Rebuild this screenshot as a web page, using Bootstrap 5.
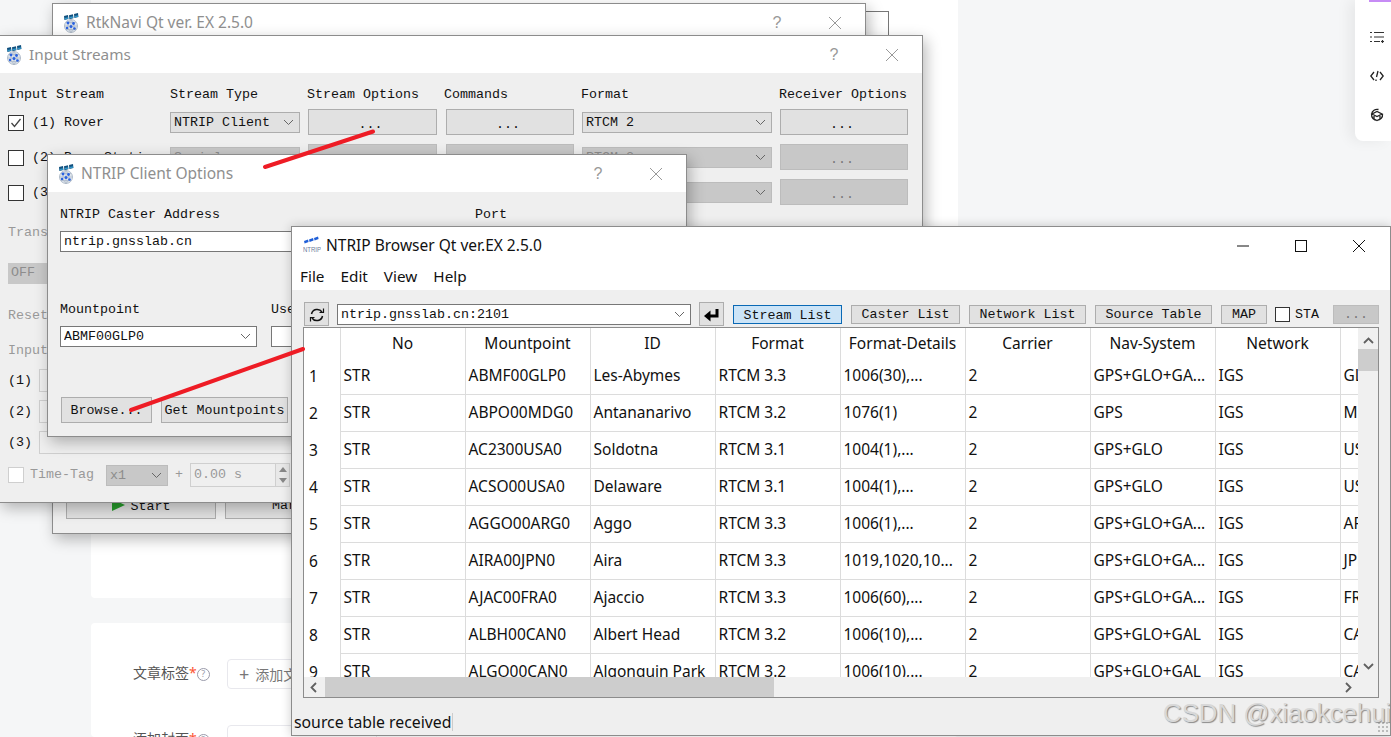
<!DOCTYPE html>
<html lang="en">
<head>
<meta charset="utf-8">
<title>NTRIP Browser</title>
<link href="https://cdn.jsdelivr.net/npm/bootstrap@5.3.0/dist/css/bootstrap.min.css" rel="stylesheet">
<style>
html,body{height:737px;overflow:hidden}
body{background:#f5f6f7;font-family:"Noto Sans","Noto Sans CJK SC",sans-serif;position:relative}
.page-col{position:absolute;left:91px;width:867px;top:0;bottom:0;overflow:hidden}
.sheet{background:#fff;border-radius:4px}
.sheet-a{height:598px;margin-bottom:25px;border-top-left-radius:0;border-top-right-radius:0}
.sheet-b{height:114px;padding:36px 0 0 42px;overflow:hidden}
.field-row{height:30px;font-size:14px;color:#555}
.field-row-2{margin-top:36px}
.field-label{width:94px;white-space:nowrap;padding-bottom:3px}
.field-label b{color:#fc5531;font-weight:400}
.help-dot{display:inline-block;width:13px;height:13px;border:1.5px solid #999aaa;border-radius:50%;font-size:9px;line-height:10px;text-align:center;color:#999aaa;vertical-align:1px}
.tag-add{border:1px solid #e8e8ed;border-radius:4px;height:30px;width:150px;padding-left:11px;color:#777}
.tag-add i{font-style:normal;font-size:18px;margin-right:6px;line-height:1}
.side-rail{position:absolute;left:1355px;top:0;width:36px;height:141px;background:#fff;border-bottom-left-radius:8px;box-shadow:-6px 0 14px rgba(0,0,0,.06)}
.side-rail::before{content:"";display:block;height:2px;margin-left:14px;background:#c78cf5}
.side-rail svg{display:block;margin:0 0 0 15px}
.rail-first{margin-top:28px!important}.rail-next{margin-top:25px!important}

.qt-win{position:absolute;border:1px solid #8c8c8c;background:#efefef;box-shadow:3px 5px 14px rgba(0,0,0,.28);display:flex;flex-direction:column;overflow:hidden}
.w-rtk{left:52px;top:3px;width:814px;height:531px;z-index:2}
.w-back{position:absolute;left:860px;top:11px;width:29px;height:40px;border:1px solid #777;background:#fff;z-index:1}
.w-input{left:-1px;top:35px;width:924px;height:468px;z-index:3}
.w-opts{left:47px;top:154px;width:640px;height:283px;z-index:4}
.w-browser{left:291px;top:226px;width:1100px;height:510px;z-index:5;box-shadow:0 0 10px rgba(0,0,0,.2)}
.ttl{height:37px;background:#fff;flex:none;display:flex;align-items:center;padding:0 1px 0 10px;font-size:15.5px;color:#8f8f8f}
.ttl svg.logo{width:16px;height:20px;margin-right:7px;flex:none}
.ttl-in{padding-left:6px;font-size:15.3px}
.ttl-act{color:#111;padding:0 2px 0 11px}
.ttl-act svg.logo{width:18px;margin-right:5px}
.tb{width:58px;height:37px;display:flex;align-items:center;justify-content:center;flex:none;color:#999;font-size:16px}
.tb-act{color:#111}
.q{font-family:"Liberation Sans",sans-serif}

.mono,.mono .btn,.mono .form-select,.mono .form-control{font-family:"Liberation Mono",monospace;font-size:13.33px;color:#111}
.mono{white-space:nowrap;line-height:16px}
.qt-btn.btn{border-radius:0;background:#e1e1e1;border:1px solid #adadad;padding:0;line-height:1;opacity:1;color:#111}
.qt-btn.btn:disabled{background:#c8c8c8;border-color:#bcbcbc;color:#777;opacity:1}
.qt-sel.form-select{border-radius:0;height:21px;padding:0 18px 0 3px;background-color:#fff;border:1px solid #adadad;line-height:19px;background-position:right 5px center;background-size:11px 7px;background-image:url("data:image/svg+xml,%3csvg xmlns='http://www.w3.org/2000/svg' viewBox='0 0 11 7'%3e%3cpath fill='none' stroke='%23666' d='M1 1l4.5 4.5L10 1'/%3e%3c/svg%3e")}
.qt-sel.form-select:disabled{background-color:#c8c8c8;border-color:#bcbcbc;color:#8d8d8d}
.qt-sel.sel-gray.form-select{background-color:#e1e1e1}
.qt-sel.sel-lined.form-select{border-color:#777}
.qt-edit.form-control{border-radius:0;height:21px;padding:0 3px;background:#fff;border:1px solid #777;line-height:19px}
.qt-edit.form-control:disabled{background:#efefef;border-color:#cfcfcf;color:#999}
.qt-chk.form-check-input{width:16px;height:16px;margin:0;border-radius:0;border:1px solid #333;background-color:#fff;flex:none;opacity:1}
.qt-chk.form-check-input:checked{background-color:#fff;border-color:#333;background-size:14px;background-image:url("data:image/svg+xml,%3csvg xmlns='http://www.w3.org/2000/svg' viewBox='0 0 14 14'%3e%3cpath fill='none' stroke='%23444' stroke-width='1.3' d='M2.5 7l3 3.5 6-7.5'/%3e%3c/svg%3e")}
.qt-chk.form-check-input:disabled{border-color:#cfcfcf}

.is-body{padding:14px 0 0 8px;color:#111}
.is-grid{display:grid;grid-template-columns:162px 138px 138px 136px 198px 128px;grid-auto-rows:26px;row-gap:9px;align-items:center}
.is-head{height:16px;margin-bottom:6px;display:grid;grid-template-columns:162px 137px 137px 137px 198px 128px}
.is-head>span{display:block}
.is-label{display:flex;align-items:center;gap:8px;padding-top:1px}
.is-grid .qt-sel{width:130px}
.is-grid .sel-wide{width:190px}
.is-grid .qt-btn{height:26px;width:128px;padding:6px 4px 0 0}
.is-grid .btn-wide.qt-btn{width:129px}
.gray-t{color:#999!important}
.m-trans{margin-top:20px}
.off-box{margin-top:22px;width:120px;height:21px;background:#c8c8c8;color:#8d8d8d;padding:2px 3px}
.m-reset{margin-top:24px}
.m-input{margin-top:19px}
.rel-rows{margin-top:10px;display:flex;flex-direction:column;gap:8px}
.rel-row{display:flex;align-items:center;height:23px}
.rel-row span{width:31px}
.rel-row .form-control{width:500px;height:23px}
.tt-row{margin-top:9px;height:24px;display:flex;align-items:center}
.tt-row .qt-chk{margin-right:6px}
.tt-text{width:76px}
.tt-row .qt-sel{width:62px}
.tt-plus{width:22px;text-align:center}
.spin{width:100px;height:24px;border:1px solid #cfcfcf;padding:3px;position:relative}
.spin-arr{position:absolute;right:0;top:0;bottom:0;width:14px;border-left:1px solid #cfcfcf;display:flex;flex-direction:column;align-items:center;justify-content:space-around;background:#e8e8e8}
.spin-arr i{display:block;width:0;height:0;border-left:4px solid transparent;border-right:4px solid transparent}
.spin-arr .up{border-bottom:5px solid #888}.spin-arr .dn{border-top:5px solid #888}

.start-row{margin-top:auto;padding:0 0 14px 13px;display:flex;gap:9px}
.start-row .qt-btn{width:150px;height:26px}
.go{display:inline-block;width:0;height:0;border-left:13px solid #279c2c;border-top:6px solid transparent;border-bottom:6px solid transparent;margin-right:6px;vertical-align:-1px}

.op-body{padding:15px 0 0 12px}
.op-top{display:flex;height:16px}
.op-top span:first-child{width:415px}
.op-edit{margin-top:8px}
.op-edit .qt-edit{width:560px}
.op-mid{margin-top:50px;display:flex}
.op-mid>div:first-child{width:211px}
.op-mid .qt-sel{width:197px;margin-top:8px}
.op-mid .qt-edit{width:200px;margin-top:8px}
.op-btns{margin-top:50px;display:flex;gap:9px;padding-left:1px}
.op-btns .qt-btn{height:26px;padding-top:1px}
.op-b1{width:91px}.op-b2{width:127px}

.menu-row{height:26px;background:#fff;flex:none;display:flex;gap:16px;padding-left:8px;font-size:15.3px;color:#111;align-items:flex-start;line-height:24px}
.tool-row{height:37px;flex:none;display:flex;align-items:center;padding:11px 0 0 12px;white-space:nowrap}
.tool-row .qt-btn{height:19px;padding-top:1px}
.tool-ic.btn{width:25px;height:24px!important;display:flex;align-items:center;justify-content:center;flex:none}
.tool-row .qt-sel{width:354px;margin:0 8px;height:21px}
.tb-sl.btn{width:109px;margin-left:9px;background:#cce4f7;border-color:#0a69b5;padding-top:3px}
.tb-cl.btn{width:109px;margin-left:9px}
.tb-nl.btn,.tb-st.btn{width:117px;margin-left:9px}
.tb-map.btn{width:46px;margin-left:9px}
.tool-row .qt-chk{margin:0 5px 0 8px;width:15px;height:15px}
.tool-row>span{padding-top:1px}
.tb-more.btn{width:46px;margin-left:14px}
.t-wrap{margin:0 11px;width:1076px;height:371px;border:1px solid #8c8c8c;background:#f0f0f0;display:grid;grid-template-columns:1054px 20px;grid-template-rows:349px 20px;flex:none}
.t-clip{overflow:hidden;background:#fff}
.st-table.table{table-layout:fixed;width:1161px;margin:0;font-size:15.5px;color:#111;--bs-table-bg:#fff;--bs-table-color:#111}
.st-table th:first-child,.st-table td:first-child{width:36px}
.st-table th,.st-table td{width:125px;height:37px;padding:0 0 0 3px;white-space:nowrap;overflow:hidden;border:0;border-right:1px solid #dcdcdc;border-bottom:1px solid #dcdcdc;vertical-align:middle}
.st-table thead th{height:29px;font-weight:400;text-align:center;border-bottom:0;padding:2px 0 0;font-size:15.5px}
.st-table tbody th{font-weight:400;border-bottom:0;padding-left:5px;padding-top:2px;width:36px}
.st-table thead th:first-child{padding:0}
.v-bar{display:flex;flex-direction:column;align-items:center;position:relative}
.v-thumb{position:absolute;top:21px;left:0;width:20px;height:22px;background:#cdcdcd}
.h-bar{position:relative;display:flex;justify-content:space-between;align-items:center;padding:0 6px}
.h-thumb{position:absolute;left:21px;top:0;bottom:0;width:449px;background:#cdcdcd}
.v-bar svg.up-a{margin-top:9px}.v-bar svg.dn-a{margin-top:auto;margin-bottom:7px}
.stat-row{flex:none;height:36px;padding:15px 0 0 2px;font-size:15.8px;line-height:18px;color:#111;position:relative}
.stat-row span{display:inline-block;border-right:1px solid #ccc;padding-right:1px;height:18px}
.grip{position:absolute;right:1px;bottom:1px;width:12px;height:12px;background-image:radial-gradient(#bbb 1px,transparent 1.2px);background-size:4px 4px}
.arrows{position:absolute;left:0;top:0;z-index:6;pointer-events:none}
.mark-text{position:absolute;left:1163px;top:697px;z-index:7;font-family:"Liberation Sans",sans-serif;font-size:25.8px;line-height:32px;color:#d8d8d8;text-shadow:1px 1px 1px #8a8a8a;white-space:nowrap}
</style>
</head>
<body>
<svg width="0" height="0" class="position-absolute">
  <symbol id="sat" viewBox="0 0 16 20">
    <g fill="#12507e"><path d="M1 3l4-1 .4 4-4 1z"/><path d="M6 2.200l4-1 .4 4-4 1z"/><path d="M11 1l4-1 .4 4-4 1z"/></g>
    <g fill="#2f95c7"><path d="M1.500 5l3.500-.8.300 1.500-3.500.8z"/><path d="M6.500 4l3.500-.8.300 1.500-3.500.8z"/><path d="M11.500 3l3.500-.8.300 1.500-3.500.8z"/></g>
    <circle cx="8" cy="13" r="6.500" fill="#dfe6ee" stroke="#9aa7b8" stroke-width=".7"/>
    <path d="M1.500 13h13M8 6.500v13M3 9.500h10M3 16.500h10M8 6.500c-4 3-4 10 0 13M8 6.500c4 3 4 10 0 13" fill="none" stroke="#a3afbf" stroke-width=".6"/>
    <g fill="#2a62e0"><circle cx="5" cy="10" r="1.400"/><circle cx="10.500" cy="10.500" r="1.400"/><circle cx="8" cy="13.500" r="1.500"/><circle cx="4" cy="15" r="1.200"/><circle cx="11.500" cy="15.500" r="1.300"/></g>
  </symbol>
  <symbol id="xx" viewBox="0 0 14 14"><path d="M1 1l12 12M13 1L1 13" fill="none" stroke="currentColor" stroke-width="1"/></symbol>
</svg>

<div class="page-col">
  <div class="sheet sheet-a"></div>
  <div class="sheet sheet-b">
    <div class="field-row d-flex align-items-center">
      <div class="field-label">文章标签<b>*</b><span class="help-dot">?</span></div>
      <div class="tag-add d-flex align-items-center"><i>+</i>添加文章标签</div>
    </div>
    <div class="field-row field-row-2 d-flex align-items-center">
      <div class="field-label">添加封面<b>*</b><span class="help-dot">?</span></div>
      <div class="tag-add"></div>
    </div>
  </div>
</div>

<div class="side-rail">
  <svg class="rail-first" width="14" height="14" viewBox="0 0 14 14"><path d="M0 2.500h2M4 2.500h10M0 7h2M4 7h10M0 11.500h2M4 11.500h6M11 11.500h3M12.500 10v3" stroke="#333" stroke-width="1.200" fill="none"/></svg>
  <svg class="rail-next" width="14" height="14" viewBox="0 0 14 14"><path d="M4 3L.8 7 4 11M10 3l3.200 4L10 11M8 2L6.500 8M6 10.500v1.500" stroke="#222" stroke-width="1.300" fill="none"/></svg>
  <svg class="rail-next" width="14" height="14" viewBox="0 0 14 14"><path d="M8.500 1.500A5.500 5.500 0 1 0 12.500 6M2 6l5 2.500L12 6 7 3.500zM4 8v3l3 1.500L10 11V8" stroke="#222" stroke-width="1.300" fill="none"/></svg>
</div>

<div class="w-back"></div>

<div class="qt-win w-rtk">
  <div class="ttl"><svg class="logo"><use href="#sat"/></svg><span class="flex-grow-1">RtkNavi Qt ver. EX 2.5.0</span><span class="tb q">?</span><span class="tb"><svg width="14" height="14"><use href="#xx"/></svg></span></div>
  <div class="start-row mono">
    <button class="btn qt-btn" type="button"><i class="go"></i>Start</button>
    <button class="btn qt-btn" type="button">Markers</button>
  </div>
</div>

<div class="qt-win w-input">
  <div class="ttl ttl-in"><svg class="logo"><use href="#sat"/></svg><span class="flex-grow-1">Input Streams</span><span class="tb q">?</span><span class="tb"><svg width="14" height="14"><use href="#xx"/></svg></span></div>
  <div class="is-body mono">
    <div class="is-head"><span>Input Stream</span><span>Stream Type</span><span>Stream Options</span><span>Commands</span><span>Format</span><span>Receiver Options</span></div>
    <div class="is-grid">
      <label class="is-label"><input class="form-check-input qt-chk" type="checkbox" checked>(1) Rover</label>
      <select class="form-select qt-sel sel-gray"><option>NTRIP Client</option></select>
      <button class="btn qt-btn btn-wide" type="button">...</button>
      <button class="btn qt-btn" type="button">...</button>
      <select class="form-select qt-sel sel-wide sel-gray"><option>RTCM 2</option></select>
      <button class="btn qt-btn" type="button">...</button>

      <label class="is-label"><input class="form-check-input qt-chk" type="checkbox">(2) Base Station</label>
      <select class="form-select qt-sel" disabled><option>Serial</option></select>
      <button class="btn qt-btn btn-wide" type="button" disabled>...</button>
      <button class="btn qt-btn" type="button" disabled>...</button>
      <select class="form-select qt-sel sel-wide" disabled><option>RTCM 2</option></select>
      <button class="btn qt-btn" type="button" disabled>...</button>

      <label class="is-label"><input class="form-check-input qt-chk" type="checkbox">(3) Correction</label>
      <select class="form-select qt-sel" disabled><option>Serial</option></select>
      <button class="btn qt-btn btn-wide" type="button" disabled>...</button>
      <button class="btn qt-btn" type="button" disabled>...</button>
      <select class="form-select qt-sel sel-wide" disabled><option></option></select>
      <button class="btn qt-btn" type="button" disabled>...</button>
    </div>
    <div class="m-trans gray-t">Transmit NMEA GPGGA to Base Station</div>
    <div class="off-box">OFF</div>
    <div class="m-reset gray-t">Reset Cmd</div>
    <div class="m-input gray-t">Input File Paths</div>
    <div class="rel-rows">
      <div class="rel-row"><span>(1)</span><input class="form-control qt-edit" disabled></div>
      <div class="rel-row"><span>(2)</span><input class="form-control qt-edit" disabled></div>
      <div class="rel-row"><span>(3)</span><input class="form-control qt-edit" disabled></div>
    </div>
    <div class="tt-row">
      <input class="form-check-input qt-chk" type="checkbox" disabled>
      <span class="tt-text gray-t">Time-Tag</span>
      <select class="form-select qt-sel" disabled><option>x1</option></select>
      <span class="tt-plus gray-t">+</span>
      <div class="spin gray-t">0.00 s<div class="spin-arr"><i class="up"></i><i class="dn"></i></div></div>
    </div>
  </div>
</div>

<div class="qt-win w-opts">
  <div class="ttl"><svg class="logo"><use href="#sat"/></svg><span class="flex-grow-1">NTRIP Client Options</span><span class="tb q">?</span><span class="tb"><svg width="14" height="14"><use href="#xx"/></svg></span></div>
  <div class="op-body mono">
    <div class="op-top"><span>NTRIP Caster Address</span><span>Port</span></div>
    <div class="op-edit"><input class="form-control qt-edit" value="ntrip.gnsslab.cn"></div>
    <div class="op-mid">
      <div>Mountpoint<select class="form-select qt-sel sel-lined"><option>ABMF00GLP0</option></select></div>
      <div>User-ID<input class="form-control qt-edit d-block"></div>
    </div>
    <div class="op-btns">
      <button class="btn qt-btn op-b1" type="button">Browse...</button>
      <button class="btn qt-btn op-b2" type="button">Get Mountpoints</button>
    </div>
  </div>
</div>

<div class="qt-win w-browser">
  <div class="ttl ttl-act">
    <svg class="logo" viewBox="0 0 18 20"><g fill="#1f5fd8"><path d="M1 5l4-1.500.6 2.500-4 1.500z"/><path d="M6 3.500l4-1.500.6 2.500-4 1.500z"/><path d="M11 2l4-1.500.6 2.500-4 1.500z"/></g><text x="0" y="16" font-family="Liberation Sans,sans-serif" font-size="6.800" textLength="18" lengthAdjust="spacingAndGlyphs" fill="#6a7a9a">NTRIP</text></svg>
    <span class="flex-grow-1">NTRIP Browser Qt ver.EX 2.5.0</span>
    <span class="tb tb-act"><svg width="14" height="14" viewBox="0 0 14 14"><path d="M1 7h12" stroke="currentColor"/></svg></span>
    <span class="tb tb-act"><svg width="14" height="14" viewBox="0 0 14 14"><rect x="1.500" y="1.500" width="11" height="11" fill="none" stroke="currentColor"/></svg></span>
    <span class="tb tb-act"><svg width="14" height="14"><use href="#xx"/></svg></span>
  </div>
  <div class="menu-row"><span>File</span><span>Edit</span><span>View</span><span>Help</span></div>
  <div class="tool-row mono">
    <button class="btn qt-btn tool-ic" type="button"><svg width="16" height="16" viewBox="0 0 16 16"><path d="M2.500 7A5.800 5.800 0 0 1 13 5M13.500 9A5.800 5.800 0 0 1 3 11" fill="none" stroke="#111" stroke-width="1.500"/><path d="M10.500 5.500h4v-4M5.500 10.500h-4v4" fill="none" stroke="#111" stroke-width="1.200"/></svg></button>
    <select class="form-select qt-sel sel-lined"><option>ntrip.gnsslab.cn:2101</option></select>
    <button class="btn qt-btn tool-ic" type="button"><svg width="18" height="16" viewBox="0 0 18 16"><path d="M14 2v7H6" fill="none" stroke="#000" stroke-width="3"/><path d="M7.500 3.500v11L1 9z" fill="#000"/></svg></button>
    <button class="btn qt-btn tb-sl" type="button">Stream List</button>
    <button class="btn qt-btn tb-cl" type="button">Caster List</button>
    <button class="btn qt-btn tb-nl" type="button">Network List</button>
    <button class="btn qt-btn tb-st" type="button">Source Table</button>
    <button class="btn qt-btn tb-map" type="button">MAP</button>
    <input class="form-check-input qt-chk" type="checkbox"><span>STA</span>
    <button class="btn qt-btn tb-more" type="button" disabled>...</button>
  </div>
  <div class="t-wrap">
    <div class="t-clip">
      <table class="table st-table">
        <thead><tr><th></th><th>No</th><th>Mountpoint</th><th>ID</th><th>Format</th><th>Format-Details</th><th>Carrier</th><th>Nav-System</th><th>Network</th></tr></thead>
        <tbody>
          <tr><th>1</th><td>STR</td><td>ABMF00GLP0</td><td>Les-Abymes</td><td>RTCM 3.3</td><td>1006(30),...</td><td>2</td><td>GPS+GLO+GA...</td><td>IGS</td><td>GLP</td></tr>
          <tr><th>2</th><td>STR</td><td>ABPO00MDG0</td><td>Antananarivo</td><td>RTCM 3.2</td><td>1076(1)</td><td>2</td><td>GPS</td><td>IGS</td><td>MDG</td></tr>
          <tr><th>3</th><td>STR</td><td>AC2300USA0</td><td>Soldotna</td><td>RTCM 3.1</td><td>1004(1),...</td><td>2</td><td>GPS+GLO</td><td>IGS</td><td>USA</td></tr>
          <tr><th>4</th><td>STR</td><td>ACSO00USA0</td><td>Delaware</td><td>RTCM 3.1</td><td>1004(1),...</td><td>2</td><td>GPS+GLO</td><td>IGS</td><td>USA</td></tr>
          <tr><th>5</th><td>STR</td><td>AGGO00ARG0</td><td>Aggo</td><td>RTCM 3.3</td><td>1006(1),...</td><td>2</td><td>GPS+GLO+GA...</td><td>IGS</td><td>ARG</td></tr>
          <tr><th>6</th><td>STR</td><td>AIRA00JPN0</td><td>Aira</td><td>RTCM 3.3</td><td>1019,1020,10...</td><td>2</td><td>GPS+GLO+GA...</td><td>IGS</td><td>JPN</td></tr>
          <tr><th>7</th><td>STR</td><td>AJAC00FRA0</td><td>Ajaccio</td><td>RTCM 3.3</td><td>1006(60),...</td><td>2</td><td>GPS+GLO+GA...</td><td>IGS</td><td>FRA</td></tr>
          <tr><th>8</th><td>STR</td><td>ALBH00CAN0</td><td>Albert Head</td><td>RTCM 3.2</td><td>1006(10),...</td><td>2</td><td>GPS+GLO+GAL</td><td>IGS</td><td>CAN</td></tr>
          <tr><th>9</th><td>STR</td><td>ALGO00CAN0</td><td>Algonquin Park</td><td>RTCM 3.2</td><td>1006(10),...</td><td>2</td><td>GPS+GLO+GAL</td><td>IGS</td><td>CAN</td></tr>
        </tbody>
      </table>
    </div>
    <div class="v-bar"><svg class="up-a" width="11" height="7" viewBox="0 0 11 7"><path d="M1 6l4.500-4.500L10 6" fill="none" stroke="#606060" stroke-width="1.800"/></svg><div class="v-thumb"></div><svg class="dn-a" width="11" height="7" viewBox="0 0 11 7"><path d="M1 1l4.500 4.500L10 1" fill="none" stroke="#606060" stroke-width="1.800"/></svg></div>
    <div class="h-bar"><svg width="7" height="11" viewBox="0 0 7 11"><path d="M6 1L1.500 5.500 6 10" fill="none" stroke="#606060" stroke-width="1.800"/></svg><div class="h-thumb"></div><svg width="7" height="11" viewBox="0 0 7 11"><path d="M1 1l4.500 4.500L1 10" fill="none" stroke="#606060" stroke-width="1.800"/></svg></div>
    <div></div>
  </div>
  <div class="stat-row"><span>source table received</span><div class="grip"></div></div>
</div>

<svg class="arrows" width="1391" height="737" viewBox="0 0 1391 737"><path d="M265 167L373 131.500M131 410L303 349" stroke="#ee1c25" stroke-width="4" stroke-linecap="round" fill="none"/></svg>
<div class="mark-text">CSDN @xiaokcehui</div>

<script src="https://cdn.jsdelivr.net/npm/bootstrap@5.3.0/dist/js/bootstrap.bundle.min.js"></script>
</body>
</html>
